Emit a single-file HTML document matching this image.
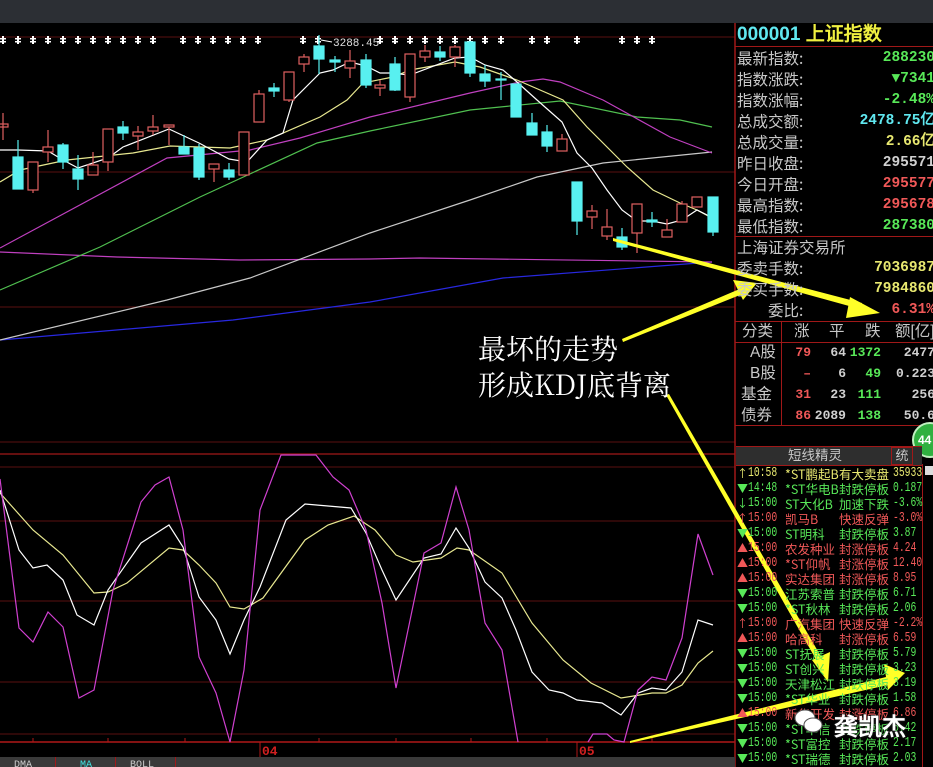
<!DOCTYPE html>
<html><head><meta charset="utf-8"><style>
html,body{margin:0;padding:0;background:#000;width:933px;height:767px;overflow:hidden;position:relative;font-family:"Liberation Sans","WenQuanYi Zen Hei",sans-serif}
.a{position:absolute;white-space:nowrap}
.lb{position:absolute;left:737px;font-size:15.5px;color:#c8c8c8;line-height:20px;font-family:"WenQuanYi Zen Hei","Noto Sans CJK SC",sans-serif}
.v{position:absolute;right:-2px;font-size:14.5px;line-height:20px;font-family:"Liberation Mono",monospace;font-weight:bold;white-space:nowrap}
.g{color:#58e858}.r{color:#f05858}.y{color:#e8e870}.c{color:#60e8f0}.w{color:#d0d0d0}
.row{position:absolute;left:736px;height:15px;font-size:12.5px;line-height:15px;width:200px;font-family:"WenQuanYi Zen Hei","Noto Sans CJK SC",sans-serif}
.row span{position:absolute;white-space:nowrap}
.row .ar{left:1px;font-size:11px}
.row .t{left:12px;font-family:"Liberation Mono",monospace;font-size:13.5px;transform:scaleX(0.72);transform-origin:0 0}
.row .n{left:49px}
.row .e{left:103px}
.row .vv{left:157px;font-family:"Liberation Mono",monospace;font-size:13.5px;transform:scaleX(0.72);transform-origin:0 0}
.tb{position:absolute;font-size:15.5px;line-height:20px;font-family:"WenQuanYi Zen Hei",sans-serif;color:#c8c8c8;white-space:nowrap}
.tn{position:absolute;font-size:13px;line-height:20px;font-family:"Liberation Mono",monospace;font-weight:bold;text-align:right;white-space:nowrap}
</style></head><body>
<div class="a" style="left:0;top:0;width:933px;height:23px;background:#2c2f34"></div>

<svg class="a" style="left:0;top:23px" width="933" height="744" viewBox="0 23 933 744">
<defs><g id="d" fill="#fff"><rect x="-1" y="-4" width="2" height="8"/><rect x="-3" y="-2" width="6" height="1.5"/><rect x="-3" y="1" width="6" height="1.5"/></g></defs>
<g stroke="#5a1010" stroke-width="1">
<line x1="0" y1="37" x2="735" y2="37"/>
<line x1="0" y1="172" x2="735" y2="172"/>
<line x1="0" y1="307" x2="735" y2="307"/>
<line x1="0" y1="442" x2="735" y2="442"/>
<line x1="0" y1="467" x2="735" y2="467"/>
<line x1="0" y1="521" x2="735" y2="521"/>
<line x1="0" y1="601" x2="735" y2="601"/>
<line x1="0" y1="682" x2="735" y2="682"/>
<line x1="0" y1="734" x2="735" y2="734"/>
</g>
<line x1="0" y1="454" x2="735" y2="454" stroke="#a01818" stroke-width="1.2"/>
<line x1="0" y1="742" x2="735" y2="742" stroke="#b01818" stroke-width="1.5"/>
<line x1="735" y1="23" x2="735" y2="767" stroke="#a01818" stroke-width="1.5"/>
<g stroke="#b01818"><line x1="260" y1="742" x2="260" y2="757"/><line x1="577" y1="742" x2="577" y2="757"/>
<line x1="33" y1="738" x2="33" y2="742"/><line x1="108" y1="738" x2="108" y2="742"/><line x1="185" y1="738" x2="185" y2="742"/><line x1="319" y1="738" x2="319" y2="742"/><line x1="396" y1="738" x2="396" y2="742"/><line x1="471" y1="738" x2="471" y2="742"/><line x1="547" y1="738" x2="547" y2="742"/><line x1="652" y1="738" x2="652" y2="742"/></g>
<text x="262" y="755" fill="#d02020" font-family="Liberation Mono" font-size="13" font-weight="bold">04</text>
<text x="579" y="755" fill="#d02020" font-family="Liberation Mono" font-size="13" font-weight="bold">05</text>

<g transform="translate(0,40)">
<use href="#d" x="3"/><use href="#d" x="18"/><use href="#d" x="33"/><use href="#d" x="48"/><use href="#d" x="63"/><use href="#d" x="78"/><use href="#d" x="93"/><use href="#d" x="108"/><use href="#d" x="123"/><use href="#d" x="138"/><use href="#d" x="153"/><use href="#d" x="183"/><use href="#d" x="198"/><use href="#d" x="213"/><use href="#d" x="228"/><use href="#d" x="243"/><use href="#d" x="258"/><use href="#d" x="303"/><use href="#d" x="318"/><use href="#d" x="380"/><use href="#d" x="395"/><use href="#d" x="410"/><use href="#d" x="425"/><use href="#d" x="440"/><use href="#d" x="455"/><use href="#d" x="470"/><use href="#d" x="485"/><use href="#d" x="501"/><use href="#d" x="532"/><use href="#d" x="547"/><use href="#d" x="577"/><use href="#d" x="622"/><use href="#d" x="637"/><use href="#d" x="652"/>
</g>
<line x1="321" y1="40" x2="332" y2="42" stroke="#fff"/>
<text x="333" y="46" fill="#e0e0e0" font-family="Liberation Mono" font-size="11">3288.45</text>

<g fill="none" stroke-width="1.2">
<polyline stroke="#2828e0" points="0,340 233,320 370,302 503,278 712,262"/>
<polyline stroke="#c040c0" points="0,252 117,257 240,260 370,259 420,258 712,262"/>
<polyline stroke="#c8c8c8" points="0,340 167,300 250,278 370,233 470,200 537,177 603,163 712,152"/>
<polyline stroke="#50c050" points="0,290 100,247 200,197 317,143 370,131 470,110 560,101 637,117 680,120 712,127"/>
<polyline stroke="#c040c0" points="0,248 167,158 250,150 300,138 370,117 470,93 520,82 543,79 560,82 603,100 670,137 712,153"/>
<polyline stroke="#e8e890" points="0,182 20,170 67,160 133,153 170,146 230,148 267,140 320,117 347,100 363,83 393,77 410,70 455,62 480,67 517,80 563,100 587,127 627,167 653,190 680,203 697,210 710,217"/>
<polyline stroke="#ffffff" points="0,150 18,150 48,151 63,160 78,168 108,158 123,147 169,129 199,143 229,159 247,162 267,140 283,133 293,100 320,73 333,70 350,62 366,66 380,73 390,73 410,75 455,58 470,57 485,65 503,70 517,82 537,100 562,122 577,153 592,168 607,190 622,210 637,221 652,221 667,224 682,220 697,210 713,218"/>
</g>

<g stroke-width="1.2">
<g stroke="#e06060" fill="none">
<line x1="3" y1="113" x2="3" y2="140"/><rect x="-2" y="124" width="10" height="3"/>
<line x1="33" y1="162" x2="33" y2="193"/><rect x="28" y="162" width="10" height="28" fill="#000"/>
<line x1="48" y1="130" x2="48" y2="162"/><rect x="43" y="147" width="10" height="5" fill="#000"/>
<line x1="93" y1="152" x2="93" y2="165"/><rect x="88" y="165" width="10" height="10"/>
<line x1="108" y1="129" x2="108" y2="171"/><rect x="103" y="129" width="10" height="33" fill="#000"/>
<line x1="138" y1="126" x2="138" y2="150"/><rect x="133" y="132" width="10" height="4" fill="#000"/>
<line x1="153" y1="115" x2="153" y2="135"/><rect x="148" y="127" width="10" height="4" fill="#000"/>
<line x1="169" y1="125" x2="169" y2="145"/><rect x="164" y="125" width="10" height="2" fill="#000"/>
<line x1="214" y1="164" x2="214" y2="182"/><rect x="209" y="164" width="10" height="5" fill="#000"/>
<rect x="239" y="132" width="10" height="43" fill="#000"/>
<line x1="259" y1="90" x2="259" y2="94"/><rect x="254" y="94" width="10" height="28" fill="#000"/>
<line x1="289" y1="72" x2="289" y2="102"/><rect x="284" y="72" width="10" height="28" fill="#000"/>
<line x1="304" y1="54" x2="304" y2="72"/><rect x="299" y="57" width="10" height="7" fill="#000"/>
<line x1="350" y1="50" x2="350" y2="78"/><rect x="345" y="61" width="10" height="7" fill="#000"/>
<line x1="380" y1="80" x2="380" y2="96"/><rect x="375" y="85" width="10" height="3" fill="#000"/>
<line x1="410" y1="54" x2="410" y2="102"/><rect x="405" y="54" width="10" height="43" fill="#000"/>
<line x1="425" y1="45" x2="425" y2="62"/><rect x="420" y="51" width="10" height="6" fill="#000"/>
<line x1="455" y1="45" x2="455" y2="67"/><rect x="450" y="47" width="10" height="10" fill="#000"/>
<line x1="562" y1="134" x2="562" y2="139"/><rect x="557" y="139" width="10" height="12" fill="#000"/>
<line x1="592" y1="205" x2="592" y2="229"/><rect x="587" y="211" width="10" height="6" fill="#000"/>
<line x1="607" y1="209" x2="607" y2="240"/><rect x="602" y="227" width="10" height="9" fill="#000"/>
<line x1="637" y1="204" x2="637" y2="253"/><rect x="632" y="204" width="10" height="29" fill="#000"/>
<line x1="667" y1="219" x2="667" y2="230"/><rect x="662" y="230" width="10" height="7" fill="#000"/>
<line x1="682" y1="201" x2="682" y2="204"/><rect x="677" y="204" width="10" height="18" fill="#000"/>
<rect x="692" y="197" width="10" height="10" fill="#000"/>
</g>
<g stroke="#58f0f0" fill="#58f0f0">
<line x1="18" y1="140" x2="18" y2="189"/><rect x="13" y="157" width="10" height="32"/>
<line x1="63" y1="143" x2="63" y2="169"/><rect x="58" y="145" width="10" height="17"/>
<line x1="78" y1="155" x2="78" y2="190"/><rect x="73" y="169" width="10" height="10"/>
<line x1="123" y1="121" x2="123" y2="140"/><rect x="118" y="127" width="10" height="6"/>
<line x1="184" y1="135" x2="184" y2="154"/><rect x="179" y="147" width="10" height="7"/>
<line x1="199" y1="144" x2="199" y2="180"/><rect x="194" y="148" width="10" height="29"/>
<line x1="229" y1="163" x2="229" y2="180"/><rect x="224" y="170" width="10" height="7"/>
<line x1="274" y1="83" x2="274" y2="97"/><rect x="269" y="88" width="10" height="3"/>
<line x1="319" y1="35" x2="319" y2="74"/><rect x="314" y="46" width="10" height="13"/>
<line x1="335" y1="56" x2="335" y2="72"/><rect x="330" y="60" width="10" height="2"/>
<line x1="366" y1="54" x2="366" y2="88"/><rect x="361" y="60" width="10" height="25"/>
<line x1="395" y1="57" x2="395" y2="91"/><rect x="390" y="64" width="10" height="26"/>
<line x1="440" y1="46" x2="440" y2="61"/><rect x="435" y="52" width="10" height="5"/>
<line x1="470" y1="41" x2="470" y2="77"/><rect x="465" y="42" width="10" height="31"/>
<line x1="485" y1="65" x2="485" y2="87"/><rect x="480" y="74" width="10" height="7"/>
<line x1="501" y1="72" x2="501" y2="100"/><rect x="496" y="79" width="10" height="1"/>
<rect x="511" y="84" width="10" height="33"/>
<line x1="532" y1="113" x2="532" y2="135"/><rect x="527" y="123" width="10" height="12"/>
<line x1="547" y1="125" x2="547" y2="152"/><rect x="542" y="132" width="10" height="14"/>
<line x1="577" y1="182" x2="577" y2="235"/><rect x="572" y="182" width="10" height="39"/>
<line x1="622" y1="228" x2="622" y2="250"/><rect x="617" y="237" width="10" height="10"/>
<line x1="652" y1="212" x2="652" y2="227"/><rect x="647" y="220" width="10" height="2"/>
<line x1="713" y1="197" x2="713" y2="236"/><rect x="708" y="197" width="10" height="35"/>
</g>
</g>

<g fill="none" stroke-width="1.2">
<polyline stroke="#e8e890" points="0,493 33,530 63,555 94,593 108,592 127,583 169,548 183,550 199,565 216,583 230,607 244,609 263,598 305,540 328,525 354,516 375,530 396,555 413,562 441,558 457,548 469,550 502,573 532,623 563,660 591,683 621,698 652,693 666,693 682,685 698,663 713,651"/>
<polyline stroke="#ffffff" points="0,490 19,550 33,568 47,565 63,580 77,615 94,625 108,590 141,543 169,525 183,547 199,597 216,620 230,654 244,620 260,587 286,520 305,504 328,506 351,508 366,533 382,570 396,600 424,558 441,554 456,528 469,548 485,582 502,598 516,630 532,672 549,690 563,693 577,700 602,703 621,715 638,693 652,688 666,690 682,672 698,620 713,625"/>
<polyline stroke="#d040d0" points="0,479 19,628 33,642 48,612 63,627 79,698 94,690 113,590 141,502 155,485 169,477 183,530 199,657 216,693 230,742 244,670 260,510 281,455 316,455 333,477 349,490 366,530 382,603 396,688 408,630 424,553 441,543 456,487 469,530 485,623 502,650 518,742"/>
<polyline stroke="#d040d0" points="588,742 593,734 607,734 614,740 624,742 638,690 652,677 666,680 682,638 698,534 713,575"/>
</g>

<g fill="#ffff28" stroke="none">
<polygon points="613,238 862,303 860,309 613,241"/>
<polygon points="880,313 850,297 846,318"/>
<polygon points="622,339 742,288 745,293 623,342"/>
<polygon points="757,283 733,280 743,300"/>
<polygon points="666,395 818,663 823,660 669,394"/>
<polygon points="828,682 812,660 830,652"/>
<polygon points="630,741 890,676 892,684 630,743"/>
<polygon points="905,673 884,664 888,690"/>
</g>
</svg>

<div class="a" style="left:478px;top:330px;font-size:28px;line-height:36px;color:#fff;font-family:'Noto Serif CJK SC','Liberation Serif',serif">最坏的走势<br>形成KDJ底背离</div>

<div class="a" style="left:0;top:757px;width:735px;height:10px;background:#3a3a3a"></div>
<div class="a" style="left:55px;top:757px;width:1px;height:10px;background:#a01818"></div>
<div class="a" style="left:115px;top:757px;width:1px;height:10px;background:#a01818"></div>
<div class="a" style="left:175px;top:757px;width:1px;height:10px;background:#a01818"></div>
<div class="a" style="left:14px;top:760px;font-size:10px;color:#ccc;font-family:'Liberation Mono'">DMA</div>
<div class="a" style="left:80px;top:760px;font-size:10px;color:#40e0e0;font-family:'Liberation Mono'">MA</div>
<div class="a" style="left:130px;top:760px;font-size:10px;color:#ccc;font-family:'Liberation Mono'">BOLL</div>

<div class="a" style="left:737px;top:23px;font-size:19px;line-height:24px;font-weight:bold;font-family:'Liberation Sans','WenQuanYi Zen Hei',sans-serif"><span class="c">000001</span> <span style="color:#f0f040">上证指数</span></div>
<div class="a" style="left:735px;top:46px;width:198px;height:1px;background:#a01818"></div>
<div class="lb" style="top:48px">最新指数:</div><div class="v g" style="top:48px">288230</div>
<div class="lb" style="top:69px">指数涨跌:</div><div class="v g" style="top:69px">▼7341</div>
<div class="lb" style="top:90px">指数涨幅:</div><div class="v g" style="top:90px">-2.48%</div>
<div class="lb" style="top:111px">总成交额:</div><div class="v c" style="top:111px">2478.75亿</div>
<div class="lb" style="top:132px">总成交量:</div><div class="v y" style="top:132px">2.66亿</div>
<div class="lb" style="top:153px">昨日收盘:</div><div class="v w" style="top:153px">295571</div>
<div class="lb" style="top:174px">今日开盘:</div><div class="v r" style="top:174px">295577</div>
<div class="lb" style="top:195px">最高指数:</div><div class="v r" style="top:195px">295678</div>
<div class="lb" style="top:216px">最低指数:</div><div class="v g" style="top:216px">287380</div>
<div class="a" style="left:735px;top:236px;width:198px;height:1px;background:#a01818"></div>
<div class="lb" style="top:237px">上海证券交易所</div>
<div class="lb" style="top:258px">委卖手数:</div><div class="v y" style="top:258px">7036987</div>
<div class="lb" style="top:279px">委买手数:</div><div class="v y" style="top:279px">7984860</div>
<div class="lb" style="top:300px;left:768px">委比:</div><div class="v r" style="top:300px">6.31%</div>
<div class="a" style="left:735px;top:321px;width:198px;height:1px;background:#a01818"></div>
<div class="tb" style="left:742px;top:322px">分类</div>
<div class="tb" style="left:794px;top:322px">涨</div>
<div class="tb" style="left:829px;top:322px">平</div>
<div class="tb" style="left:865px;top:322px">跌</div>
<div class="tb" style="left:895px;top:322px">额[亿]</div>
<div class="a" style="left:735px;top:342px;width:198px;height:1px;background:#a01818"></div>
<div class="a" style="left:781px;top:321px;width:1px;height:104px;background:#a01818"></div>
<div class="tb" style="left:750px;top:343px">A股</div>
<div class="tb" style="left:750px;top:364px">B股</div>
<div class="tb" style="left:741px;top:385px">基金</div>
<div class="tb" style="left:741px;top:406px">债券</div>
<div class="tn r" style="left:780px;width:31px;top:343px">79</div><div class="tn w" style="left:815px;width:31px;top:343px">64</div><div class="tn g" style="left:840px;width:41px;top:343px">1372</div><div class="tn w" style="left:885px;width:50px;top:343px">2477</div>
<div class="tn r" style="left:780px;width:31px;top:364px">–</div><div class="tn w" style="left:815px;width:31px;top:364px">6</div><div class="tn g" style="left:840px;width:41px;top:364px">49</div><div class="tn w" style="left:885px;width:50px;top:364px">0.223</div>
<div class="tn r" style="left:780px;width:31px;top:385px">31</div><div class="tn w" style="left:815px;width:31px;top:385px">23</div><div class="tn g" style="left:840px;width:41px;top:385px">111</div><div class="tn w" style="left:885px;width:50px;top:385px">256</div>
<div class="tn r" style="left:780px;width:31px;top:406px">86</div><div class="tn w" style="left:806px;width:40px;top:406px">2089</div><div class="tn g" style="left:840px;width:41px;top:406px">138</div><div class="tn w" style="left:885px;width:50px;top:406px">50.6</div>
<div class="a" style="left:735px;top:425px;width:198px;height:1px;background:#a01818"></div>

<div class="a" style="left:912px;top:422px;width:36px;height:36px;border-radius:50%;background:#30b040;border:2px solid #c0f0c0;box-sizing:border-box"></div>
<div class="a" style="left:918px;top:433px;color:#fff;font-size:12px;font-weight:bold">44</div>

<div class="a" style="left:736px;top:446px;width:186px;height:18px;background:#2e2e2e;border-top:1px solid #a01818;border-bottom:1px solid #a01818"></div>
<div class="a" style="left:788px;top:447px;color:#c8c8c8;font-size:13.5px;line-height:17px">短线精灵</div>
<div class="a" style="left:891px;top:447px;width:20px;height:16px;border:1px solid #a01818;color:#c8c8c8;font-size:13px;line-height:16px;text-align:center">统</div>
<div class="a" style="left:922px;top:464px;width:1px;height:303px;background:#a01818"></div>
<div class="a" style="left:925px;top:466px;width:8px;height:9px;background:#ddd"></div>

<div class="row y" style="top:466px"><span class="ar">↑</span><span class="t">10:58</span><span class="n">*ST鹏起B</span><span class="e">有大卖盘</span><span class="vv">35933</span></div>
<div class="row g" style="top:481px"><span class="ar">▼</span><span class="t">14:48</span><span class="n">*ST华电B</span><span class="e">封跌停板</span><span class="vv">0.187</span></div>
<div class="row g" style="top:496px"><span class="ar">↓</span><span class="t">15:00</span><span class="n">ST大化B</span><span class="e">加速下跌</span><span class="vv">-3.6%</span></div>
<div class="row r" style="top:511px"><span class="ar">↑</span><span class="t">15:00</span><span class="n">凯马B</span><span class="e">快速反弹</span><span class="vv">-3.0%</span></div>
<div class="row g" style="top:526px"><span class="ar">▼</span><span class="t">15:00</span><span class="n">ST明科</span><span class="e">封跌停板</span><span class="vv">3.87</span></div>
<div class="row r" style="top:541px"><span class="ar">▲</span><span class="t">15:00</span><span class="n">农发种业</span><span class="e">封涨停板</span><span class="vv">4.24</span></div>
<div class="row r" style="top:556px"><span class="ar">▲</span><span class="t">15:00</span><span class="n">*ST仰帆</span><span class="e">封涨停板</span><span class="vv">12.40</span></div>
<div class="row r" style="top:571px"><span class="ar">▲</span><span class="t">15:00</span><span class="n">实达集团</span><span class="e">封涨停板</span><span class="vv">8.95</span></div>
<div class="row g" style="top:586px"><span class="ar">▼</span><span class="t">15:00</span><span class="n">江苏索普</span><span class="e">封跌停板</span><span class="vv">6.71</span></div>
<div class="row g" style="top:601px"><span class="ar">▼</span><span class="t">15:00</span><span class="n">*ST秋林</span><span class="e">封跌停板</span><span class="vv">2.06</span></div>
<div class="row r" style="top:616px"><span class="ar">↑</span><span class="t">15:00</span><span class="n">广汽集团</span><span class="e">快速反弹</span><span class="vv">-2.2%</span></div>
<div class="row r" style="top:631px"><span class="ar">▲</span><span class="t">15:00</span><span class="n">哈高科</span><span class="e">封涨停板</span><span class="vv">6.59</span></div>
<div class="row g" style="top:646px"><span class="ar">▼</span><span class="t">15:00</span><span class="n">ST抚展</span><span class="e">封跌停板</span><span class="vv">5.79</span></div>
<div class="row g" style="top:661px"><span class="ar">▼</span><span class="t">15:00</span><span class="n">ST创兴</span><span class="e">封跌停板</span><span class="vv">3.23</span></div>
<div class="row g" style="top:676px"><span class="ar">▼</span><span class="t">15:00</span><span class="n">天津松江</span><span class="e">封跌停板</span><span class="vv">3.19</span></div>
<div class="row g" style="top:691px"><span class="ar">▼</span><span class="t">15:00</span><span class="n">*ST华业</span><span class="e">封跌停板</span><span class="vv">1.58</span></div>
<div class="row r" style="top:706px"><span class="ar">▲</span><span class="t">15:00</span><span class="n">新华开发</span><span class="e">封涨停板</span><span class="vv">6.86</span></div>
<div class="row g" style="top:721px"><span class="ar">▼</span><span class="t">15:00</span><span class="n">*ST华信</span><span class="e">封跌停板</span><span class="vv">5.42</span></div>
<div class="row g" style="top:736px"><span class="ar">▼</span><span class="t">15:00</span><span class="n">*ST富控</span><span class="e">封跌停板</span><span class="vv">2.17</span></div>
<div class="row g" style="top:751px"><span class="ar">▼</span><span class="t">15:00</span><span class="n">*ST瑞德</span><span class="e">封跌停板</span><span class="vv">2.03</span></div>

<svg class="a" style="left:794px;top:708px" width="30" height="28"><ellipse cx="11" cy="10" rx="10" ry="8" fill="#fff" stroke="#555"/><ellipse cx="19" cy="17" rx="9" ry="7" fill="#fff" stroke="#555"/></svg>
<div class="a" style="left:834px;top:707px;font-size:24px;color:#fff;font-weight:bold;text-shadow:0 0 2px #333">龚凯杰</div>
</body></html>
